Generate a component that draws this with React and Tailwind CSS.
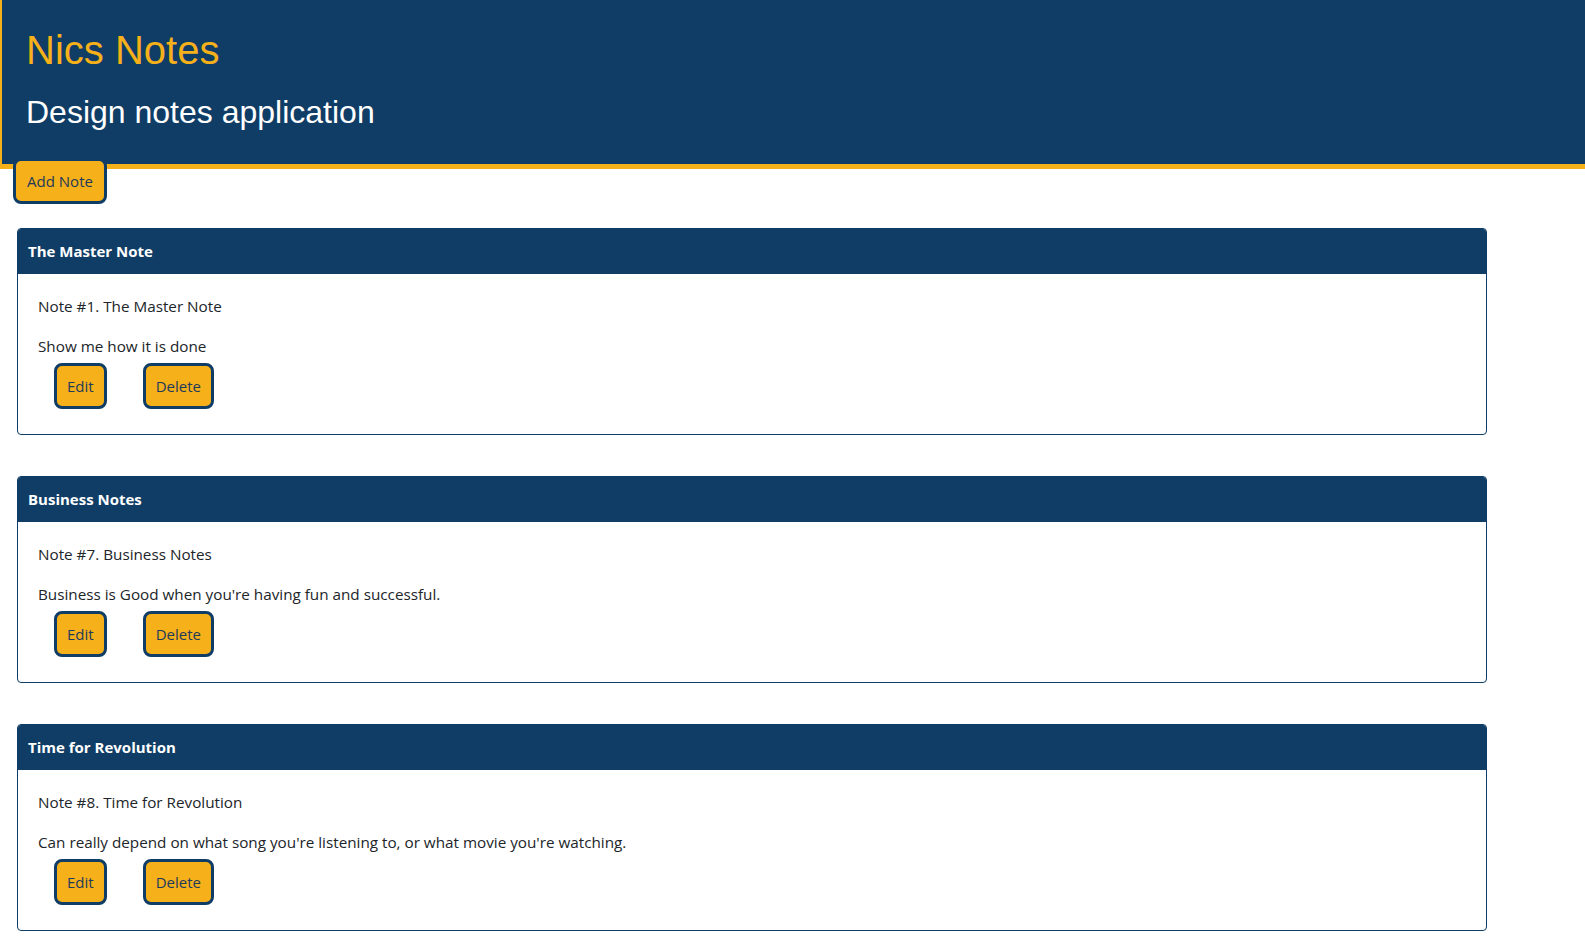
import React from 'react'

const notes = [
  { id: 1, title: 'The Master Note', body: 'Show me how it is done' },
  { id: 7, title: 'Business Notes', body: "Business is Good when you're having fun and successful." },
  { id: 8, title: 'Time for Revolution', body: "Can really depend on what song you're listening to, or what movie you're watching." },
]

const btn =
  'h-[46px] rounded-[8px] border-[3px] border-[#0f3d66] bg-[#f5b01a] text-[15px] text-[#1f3a5a] leading-none'

const NoteCard = ({ note }) => (
  <div className="w-[1470px] rounded-[4px] border border-[#0f3d66] overflow-hidden">
    {/* Card Header */}
    <div className="h-[45px] bg-[#0f3d66] px-[10px] flex items-center">
      <h3 className="text-[15px] font-bold text-white">{note.title}</h3>
    </div>

    {/* Card Body */}
    <div className="px-[20px] pt-[20px] pb-[25px] text-[#212529] text-[15.25px]">
      <p className="leading-[24px] mb-[16px]">Note #{note.id}. {note.title}</p>
      <p className="leading-[24px] mb-[5px]">{note.body}</p>
      <div className="flex pl-[16px] gap-[36px]">
        <button className={`${btn} px-[10px]`}>Edit</button>
        <button className={`${btn} px-[10px]`}>Delete</button>
      </div>
    </div>
  </div>
)

const App = () => {
  return (
    <div className="min-h-screen bg-white" style={{ fontFamily: '"Open Sans", "Noto Sans", sans-serif' }}>
      {/* Header */}
      <header
        className="bg-[#0f3d66] border-l-2 border-b-[5px] border-[#f5b01a] pl-[24px] pt-[27px] pb-[33px]"
        style={{ fontFamily: '"Liberation Sans", Arial, sans-serif' }}
      >
        <h1 className="text-[40px] leading-[46px] text-[#f5b01a] mb-[21px]">Nics Notes</h1>
        <h2 className="text-[32px] leading-[37px] text-white">Design notes application</h2>
      </header>

      <div className="ml-[13px] -mt-[11px]">
        <button className={`${btn} w-[94px]`}>Add Note</button>
      </div>

      <div className="ml-[17px] mt-[24px] flex flex-col gap-[41px] pb-[20px]">
        {notes.map((note) => (
          <NoteCard key={note.id} note={note} />
        ))}
      </div>
    </div>
  )
}

export default App
